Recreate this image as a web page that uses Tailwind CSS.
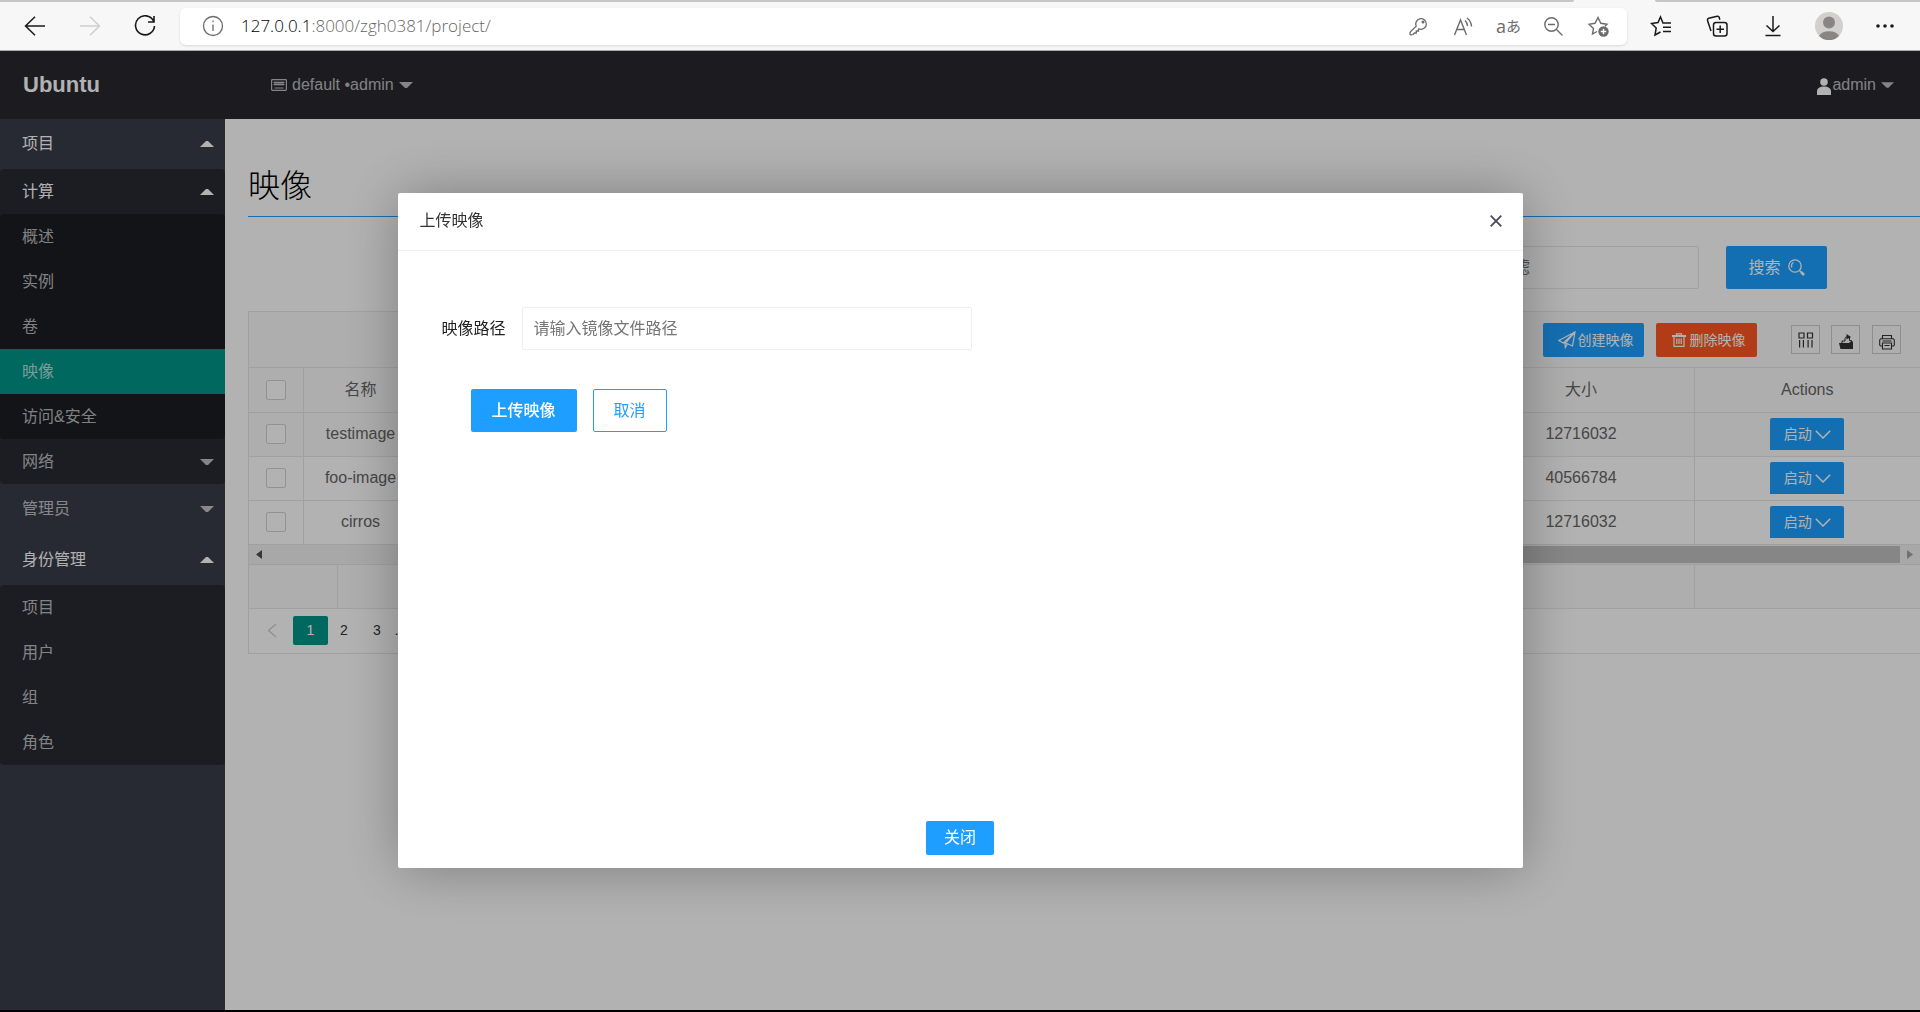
<!DOCTYPE html>
<html lang="zh-CN">
<head>
    <meta charset="UTF-8">
    <meta name="viewport" content="width=device-width, initial-scale=1.0">
    <title>映像</title>
    <script src="https://cdn.jsdelivr.net/npm/@tailwindcss/browser@4"></script>
</head>
<body class="font-['Liberation_Sans','Noto_Sans_CJK_SC',sans-serif] text-base text-[#333]">
    <!-- Shared icons -->
    <svg class="hidden">
        <symbol id="up" viewBox="0 0 14 6"><path d="M0 6 6 0h2l6 6z" fill="currentColor"/></symbol>
        <symbol id="down" viewBox="0 0 14 6"><path d="M0 0h14L8 6H6z" fill="currentColor"/></symbol>
        <symbol id="chevron" viewBox="0 0 16 9"><path d="M.8.8 8 8l7.200-7.200" fill="none" stroke="currentColor" stroke-width="1.500"/></symbol>
    </svg>

    <div class="flex h-screen flex-col border-b-2 border-black">
        <!-- Browser toolbar -->
        <div class="flex h-[2px] shrink-0 justify-between bg-[#f7f7f7]">
            <div class="w-[82%] rounded-br-sm bg-[#c6c6c6]"></div>
            <div class="w-[265px] rounded-bl-sm bg-[#c6c6c6]"></div>
        </div>
        <div class="flex h-[49px] shrink-0 items-center border-b border-[#ababab] bg-[#f7f7f7] pl-6 pr-[21px] text-[#1a1a1a]">
            <div class="flex items-center gap-[33px]">
                <button aria-label="后退"><svg class="size-[22px]" viewBox="0 0 22 22" fill="none" stroke="currentColor" stroke-width="1.500"><path d="M21 11H1.500M11 1.800 1.500 11l9.500 9.200"/></svg></button>
                <button aria-label="前进"><svg class="size-[22px] text-[#cfcfcf]" viewBox="0 0 22 22" fill="none" stroke="currentColor" stroke-width="1.500"><path d="M1 11h19.500M11 1.800l9.500 9.200-9.500 9.200"/></svg></button>
                <button aria-label="刷新"><svg class="size-[22px]" viewBox="0 0 22 22" fill="none" stroke="currentColor" stroke-width="1.600"><path d="M19.500 6A9.500 9.500 0 1 0 20.500 11M20 1v6h-6"/></svg></button>
            </div>
            <div class="ml-6 flex h-[37px] flex-1 items-center rounded-md bg-white pl-[22px] pr-[18px] text-[#6b6b6b] shadow-sm">
                <svg class="size-[22px]" viewBox="0 0 22 22" fill="none" stroke="currentColor" stroke-width="1.300"><circle cx="11" cy="11" r="9.500"/><path d="M11 9.500V16M11 5.500v1.800"/></svg>
                <p class="ml-[17px] flex-1 font-['Open_Sans',sans-serif] text-[17px] font-light text-[#666]"><span class="text-black">127.0.0.1</span>:8000/zgh0381/project/</p>
                <div class="flex items-center gap-6">
                    <svg class="size-[21px]" viewBox="0 0 21 21" fill="none" stroke="currentColor" stroke-width="1.300"><path d="M8.200 10.200A5.300 5.300 0 1 1 12 13.200L10.500 13v2H8.300v2H6.500L5 18.500q-2.500 1-3-.5-.5-1.500.7-2.600z"/><circle cx="15" cy="6" r=".9" fill="currentColor"/></svg>
                    <svg class="size-[21px]" viewBox="0 0 21 21" fill="none" stroke="currentColor" stroke-width="1.400"><path d="M1.500 19 7.500 4l6 15M3.700 13.500h7.600M12 4.500a8 8 0 0 1 2.500 5.500M14 2a11 11 0 0 1 4.500 8.500"/></svg>
                    <span class="flex w-[21px] justify-center font-['Open_Sans','Noto_Sans_CJK_JP',sans-serif] text-[15px] leading-5"><span class="text-lg leading-5">a</span>あ</span>
                    <svg class="size-[21px]" viewBox="0 0 21 21" fill="none" stroke="currentColor" stroke-width="1.400"><circle cx="8.500" cy="8.500" r="6.700"/><path d="M5 8.500h7M13.500 13.500l6 6"/></svg>
                    <svg class="size-[21px]" viewBox="0 0 21 21" fill="none" stroke="currentColor" stroke-width="1.400"><path d="M9 15.500 4.500 18l1-5.500L1 8.200l6-.9L10 1.500l2.800 5.800 6.200.9-2 2"/><circle cx="15.500" cy="15.500" r="5.200" fill="currentColor" stroke="none"/><path d="M15.500 12.800v5.400M12.800 15.500h5.400" stroke="#fff"/></svg>
                </div>
            </div>
            <div class="ml-5 flex items-center gap-7">
                <button class="flex w-7 justify-center" aria-label="收藏夹"><svg class="size-[22px]" viewBox="0 0 22 22" fill="none" stroke="currentColor" stroke-width="1.500"><path d="M19.500 8H13L10.500 2 8 7.500l-6.500 1L6.200 13 5 20l5.500-3M13 8h8M13 12.200h8M13 16.500h8"/></svg></button>
                <button class="flex w-7 justify-center" aria-label="集锦"><svg class="size-[22px]" viewBox="0 0 22 22" fill="none" stroke="currentColor" stroke-width="1.500"><rect x="7.500" y="7.500" width="13.500" height="13.500" rx="2.500"/><path d="M14.200 10.500v7.500M10.500 14.200H18M5 16 1.500 5.500Q1 4 2.700 3.300l8.500-2.100q1.600-.3 2 1.100l.6 2.500"/></svg></button>
                <button class="flex w-7 justify-center" aria-label="下载"><svg class="size-[22px]" viewBox="0 0 22 22" fill="none" stroke="currentColor" stroke-width="1.500"><path d="M11 1v15M4.500 10.500l6.500 6 6.500-6M3.500 20.500h15"/></svg></button>
                <button class="w-7" aria-label="用户"><svg class="size-7" viewBox="0 0 28 28"><circle cx="14" cy="14" r="14" fill="#d2d0ce"/><circle cx="14" cy="10.500" r="6" fill="#8a8583"/><path d="M4 24a10.500 7 0 0 1 20 0 14 14 0 0 1-20 0z" fill="#8a8583"/></svg></button>
                <button class="flex w-7 justify-center" aria-label="更多"><svg class="h-1 w-[18px]" viewBox="0 0 18 4" fill="currentColor"><circle cx="2" cy="2" r="1.800"/><circle cx="9" cy="2" r="1.800"/><circle cx="16" cy="2" r="1.800"/></svg></button>
            </div>
        </div>

        <div class="flex min-h-0 flex-1 flex-col overflow-hidden bg-white">
            <!-- Header -->
            <header class="flex h-[68px] shrink-0 items-center bg-[#27282f] pr-[26px] text-white/70">
                <a href="#" class="w-[248px] pb-[2px] pl-[23px] text-[22px] font-bold text-white">Ubuntu</a>
                <button class="ml-[23px] flex items-center">
                    <svg class="mr-[5px] h-3 w-4" viewBox="0 0 16 12" fill="none" stroke="currentColor" stroke-width="1.200"><rect x=".6" y=".6" width="14.800" height="10.800" rx=".8"/><path d="M2.500 3.500h11M2.500 5.500h11M4 2.500v4M6 2.500v4M8 2.500v4M10 2.500v4M12 2.500v4M3.500 9h9"/></svg>
                    default •admin
                    <svg class="ml-[5px] h-[6px] w-[14px]"><use href="#down"/></svg>
                </button>
                <button class="ml-auto flex items-center">
                    <svg class="mr-px mt-[3px] h-[17px] w-[14px] text-white" viewBox="0 0 14 17" fill="currentColor"><circle cx="7" cy="4" r="3.800"/><path d="M0 17v-3.500C0 10 3 8.500 7 8.500s7 1.500 7 5V17z"/></svg>
                    admin
                    <svg class="ml-[5px] h-[6px] w-[13px]"><use href="#down"/></svg>
                </button>
            </header>

            <div class="flex min-h-0 flex-1">
                <!-- Side menu -->
                <nav class="w-[225px] shrink-0 bg-[#393d49] text-white/70">
                    <a href="#" class="flex h-[50px] items-center justify-between pl-[22px] pr-[11px] text-white">项目<svg class="h-[6px] w-[14px]"><use href="#up"/></svg></a>
                    <div class="rounded-sm bg-black/30">
                        <a href="#" class="flex h-[45px] items-center justify-between pl-[22px] pr-[11px] text-white">计算<svg class="h-[6px] w-[14px]"><use href="#up"/></svg></a>
                        <div class="rounded-sm bg-black/30">
                            <a href="#" class="flex h-[45px] items-center pl-[22px]">概述</a>
                            <a href="#" class="flex h-[45px] items-center pl-[22px]">实例</a>
                            <a href="#" class="flex h-[45px] items-center pl-[22px]">卷</a>
                            <a href="#" class="flex h-[45px] items-center bg-[#009688] pl-[22px]">映像</a>
                            <a href="#" class="flex h-[45px] items-center pl-[22px]">访问&amp;安全</a>
                        </div>
                        <a href="#" class="flex h-[45px] items-center justify-between pl-[22px] pr-[11px]">网络<svg class="h-[6px] w-[14px]"><use href="#down"/></svg></a>
                    </div>
                    <a href="#" class="flex h-[50px] items-center justify-between pl-[22px] pr-[11px]">管理员<svg class="h-[6px] w-[14px]"><use href="#down"/></svg></a>
                    <a href="#" class="flex h-[51px] items-center justify-between pl-[22px] pr-[11px] text-white">身份管理<svg class="h-[6px] w-[14px]"><use href="#up"/></svg></a>
                    <div class="rounded-sm bg-black/30">
                        <a href="#" class="flex h-[45px] items-center pl-[22px]">项目</a>
                        <a href="#" class="flex h-[45px] items-center pl-[22px]">用户</a>
                        <a href="#" class="flex h-[45px] items-center pl-[22px]">组</a>
                        <a href="#" class="flex h-[45px] items-center pl-[22px]">角色</a>
                    </div>
                </nav>

                <!-- Image list -->
                <main class="min-w-0 flex-1 overflow-hidden pl-[23px]">
                    <h1 class="border-b border-[#1e9fff] pb-[6px] pt-[44px] text-[32px] font-light leading-[47px] text-black">映像</h1>
                    <form class="mt-[29px] flex justify-end pr-[93px]">
                        <input type="text" aria-label="过滤" placeholder="过滤" class="h-[43px] w-[214px] rounded-xs border border-[#e6e6e6] px-3 placeholder:text-[#757575]">
                        <button type="button" class="ml-[27px] flex h-[43px] w-[101px] items-center justify-center gap-[7px] rounded-xs bg-[#1e9fff] text-white">搜索
                            <svg class="size-[17px]" viewBox="0 0 17 17" fill="none" stroke="currentColor" stroke-width="1.300"><circle cx="7" cy="7" r="6.200"/><path d="M4 8.500A3.500 3.500 0 0 1 5.500 3.500M11.500 11.500l4.500 4.500" /><path d="m13 13 3 3" stroke-width="2.500"/></svg>
                        </button>
                    </form>

                    <div class="mt-[22px] border border-r-0 border-[#e6e6e6]">
                        <div class="flex h-14 items-center justify-end border-b border-[#e6e6e6] bg-[#f9f9f9] pr-[19px] text-[#333]">
                            <button class="flex h-[34px] w-[101px] items-center justify-center gap-[2px] rounded-xs bg-[#1e9fff] pl-1 text-sm text-white">
                                <svg class="size-[18px]" viewBox="0 0 18 18" fill="none" stroke="currentColor" stroke-width="1.200"><path d="M17 1 .8 9.500l4.500 2.500L17 1l-2.500 14-5-2.200-2.200 3.700L7 12.500 17 1M5.300 12l4.200 1"/></svg>创建映像
                            </button>
                            <button class="ml-3 flex h-[34px] w-[101px] items-center justify-center gap-1 rounded-xs bg-[#ff5722] pl-1 text-sm text-white">
                                <svg class="size-[14px]" viewBox="0 0 14 14" fill="none" stroke="currentColor" stroke-width="1.200"><path d="M4.500 2.500V.8h5v1.700M2 3v10.300h10V3M4.800 5.500v5.500M7 5.500v5.500M9.200 5.500v5.500"/><path d="M0 3h14" stroke-width="2"/></svg>删除映像
                            </button>
                            <button aria-label="筛选列" class="ml-[34px] flex size-[29px] items-center justify-center border border-[#ccc]">
                                <svg class="size-4" viewBox="0 0 16 16" fill="none" stroke="currentColor" stroke-width="1.200"><path d="M1 1h5v5H1zM9.500 1h5v5h-5zM1.600 8v7.500M5.400 8v7.500M10.100 8v7.500M14 8v7.500"/></svg>
                            </button>
                            <button aria-label="导出" class="ml-[11px] flex size-[29px] items-center justify-center border border-[#ccc] pt-1">
                                <svg class="size-4" viewBox="0 0 16 16"><path d="M1 9h10l1.500-1.500H15V15H2.500z" fill="currentColor"/><path d="M4 9.500V7h3V4.500Q7 3 9 3h2.500V6.500h2V9" fill="none" stroke="currentColor"/><path d="M8.500 0 13 3 8.500 5.500z" fill="currentColor"/></svg>
                            </button>
                            <button aria-label="打印" class="ml-3 flex size-[29px] items-center justify-center border border-[#ccc] pt-1">
                                <svg class="size-4" viewBox="0 0 16 16" fill="none" stroke="currentColor" stroke-width="1.100"><path d="M3.500 4.500v-3h9v3M3 12H1.500L.7 11V6l1-1.300h12.600l1 1.300v5l-.8 1H13M3.500 9h9v6h-9zM3.500 7h9M5.500 11.500h5"/></svg>
                            </button>
                        </div>

                        <table class="w-full table-fixed border-collapse text-center text-[#666] [&_td]:h-11 [&_td]:border [&_td]:border-[#e6e6e6] [&_th]:h-11 [&_th]:border [&_th]:border-[#e6e6e6] [&_th]:font-normal [&_td:first-child]:border-l-0 [&_th:first-child]:border-l-0 [&_th]:border-t-0 [&_td:last-child]:border-r-0 [&_th:last-child]:border-r-0">
                            <colgroup>
                                <col class="w-[54px]"><col class="w-[115px]"><col><col class="w-[226px]"><col class="w-[226px]">
                            </colgroup>
                            <thead>
                                <tr class="bg-[#f9f9f9]">
                                    <th><input type="checkbox" aria-label="全选" class="mx-auto block size-5 appearance-none rounded-xs border border-[#d2d2d2] bg-white"></th>
                                    <th>名称</th><th></th><th>大小</th><th>Actions</th>
                                </tr>
                            </thead>
                            <tbody>
                                <tr class="bg-[#f9f9f9]">
                                    <td><input type="checkbox" aria-label="testimage" class="mx-auto block size-5 appearance-none rounded-xs border border-[#d2d2d2] bg-white"></td>
                                    <td>testimage</td><td></td><td>12716032</td>
                                    <td><button class="mx-auto flex h-8 w-[74px] items-center justify-center gap-[3px] rounded-t-xs bg-[#1e9fff] text-sm text-white">启动<svg class="h-[9px] w-4"><use href="#chevron"/></svg></button></td>
                                </tr>
                                <tr>
                                    <td><input type="checkbox" aria-label="foo-image" class="mx-auto block size-5 appearance-none rounded-xs border border-[#d2d2d2] bg-white"></td>
                                    <td>foo-image</td><td></td><td>40566784</td>
                                    <td><button class="mx-auto flex h-8 w-[74px] items-center justify-center gap-[3px] rounded-t-xs bg-[#1e9fff] text-sm text-white">启动<svg class="h-[9px] w-4"><use href="#chevron"/></svg></button></td>
                                </tr>
                                <tr>
                                    <td><input type="checkbox" aria-label="cirros" class="mx-auto block size-5 appearance-none rounded-xs border border-[#d2d2d2] bg-white"></td>
                                    <td>cirros</td><td></td><td>12716032</td>
                                    <td><button class="mx-auto flex h-8 w-[74px] items-center justify-center gap-[3px] rounded-t-xs bg-[#1e9fff] text-sm text-white">启动<svg class="h-[9px] w-4"><use href="#chevron"/></svg></button></td>
                                </tr>
                            </tbody>
                        </table>

                        <!-- Horizontal scrollbar -->
                        <div class="flex h-[19px] items-center justify-between bg-[#f1f1f1] px-[7px]">
                            <svg class="h-[9px] w-[6px]" viewBox="0 0 6 9"><path d="M6 0v9L0 4.500z" fill="#505050"/></svg>
                            <div class="ml-auto mr-[7px] h-[17px] w-3/4 bg-[#c1c1c1]"></div>
                            <svg class="h-[9px] w-[6px]" viewBox="0 0 6 9"><path d="M0 0v9l6-4.500z" fill="#a3a3a3"/></svg>
                        </div>
                        <div class="flex h-[45px] border-y border-[#e6e6e6] bg-[#f9f9f9]">
                            <div class="w-[89px] border-r border-[#e6e6e6]"></div>
                            <div class="flex-1 border-r border-[#e6e6e6]"></div>
                            <div class="w-[225px]"></div>
                        </div>

                        <!-- Pagination -->
                        <div class="flex h-11 items-center pb-px pl-[18px] text-sm text-[#333]">
                            <button aria-label="上一页" class="mr-4 text-[#d2d2d2]"><svg class="h-[15px] w-[10px]" viewBox="0 0 10 15" fill="none" stroke="currentColor" stroke-width="1.500"><path d="M9 1 1.500 7.500 9 14"/></svg></button>
                            <button class="h-[29px] w-[35px] rounded-xs bg-[#009688] text-white">1</button>
                            <button class="w-8">2</button>
                            <button class="w-[34px]">3</button>
                            <span>…</span>
                        </div>
                    </div>
                </main>
            </div>
        </div>
    </div>

    <!-- Upload dialog -->
    <div class="fixed inset-x-0 bottom-[2px] top-[51px] flex items-center justify-center overflow-hidden bg-black/30">
        <section role="dialog" aria-labelledby="dialogTitle" class="flex min-h-[675px] w-full max-w-[1125px] flex-col rounded-xs bg-white shadow-[1px_1px_56px_rgba(0,0,0,0.3)]">
            <div class="flex h-[58px] items-center justify-between border-b border-[#eee] pb-[2px] pl-[22px] pr-[21px]">
                <h2 id="dialogTitle">上传映像</h2>
                <button aria-label="关闭对话框"><svg class="size-3" viewBox="0 0 12 12" stroke="#4a4958" stroke-width="1.800"><path d="m.7.700 10.600 10.600M11.300.700.700 11.300"/></svg></button>
            </div>
            <form class="flex-1 px-11 pt-14">
                <div class="flex items-center">
                    <label for="imagePath" class="w-[80px] text-[#222]">映像路径</label>
                    <input id="imagePath" type="text" placeholder="请输入镜像文件路径" class="h-[43px] w-[450px] rounded-xs border border-[#eee] px-[11px] placeholder:text-[#757575]">
                </div>
                <div class="mt-[39px] flex gap-4 pl-[29px]">
                    <button type="button" class="h-[43px] w-[106px] rounded-xs bg-[#1e9fff] font-medium text-white">上传映像</button>
                    <button type="button" class="h-[43px] w-[74px] rounded-xs border border-[#1e9fff] text-[#1e9fff]">取消</button>
                </div>
            </form>
            <button type="button" class="mx-auto mb-[13px] h-[34px] w-[68px] rounded-xs bg-[#1e9fff] text-white">关闭</button>
        </section>
    </div>
</body>
</html>
